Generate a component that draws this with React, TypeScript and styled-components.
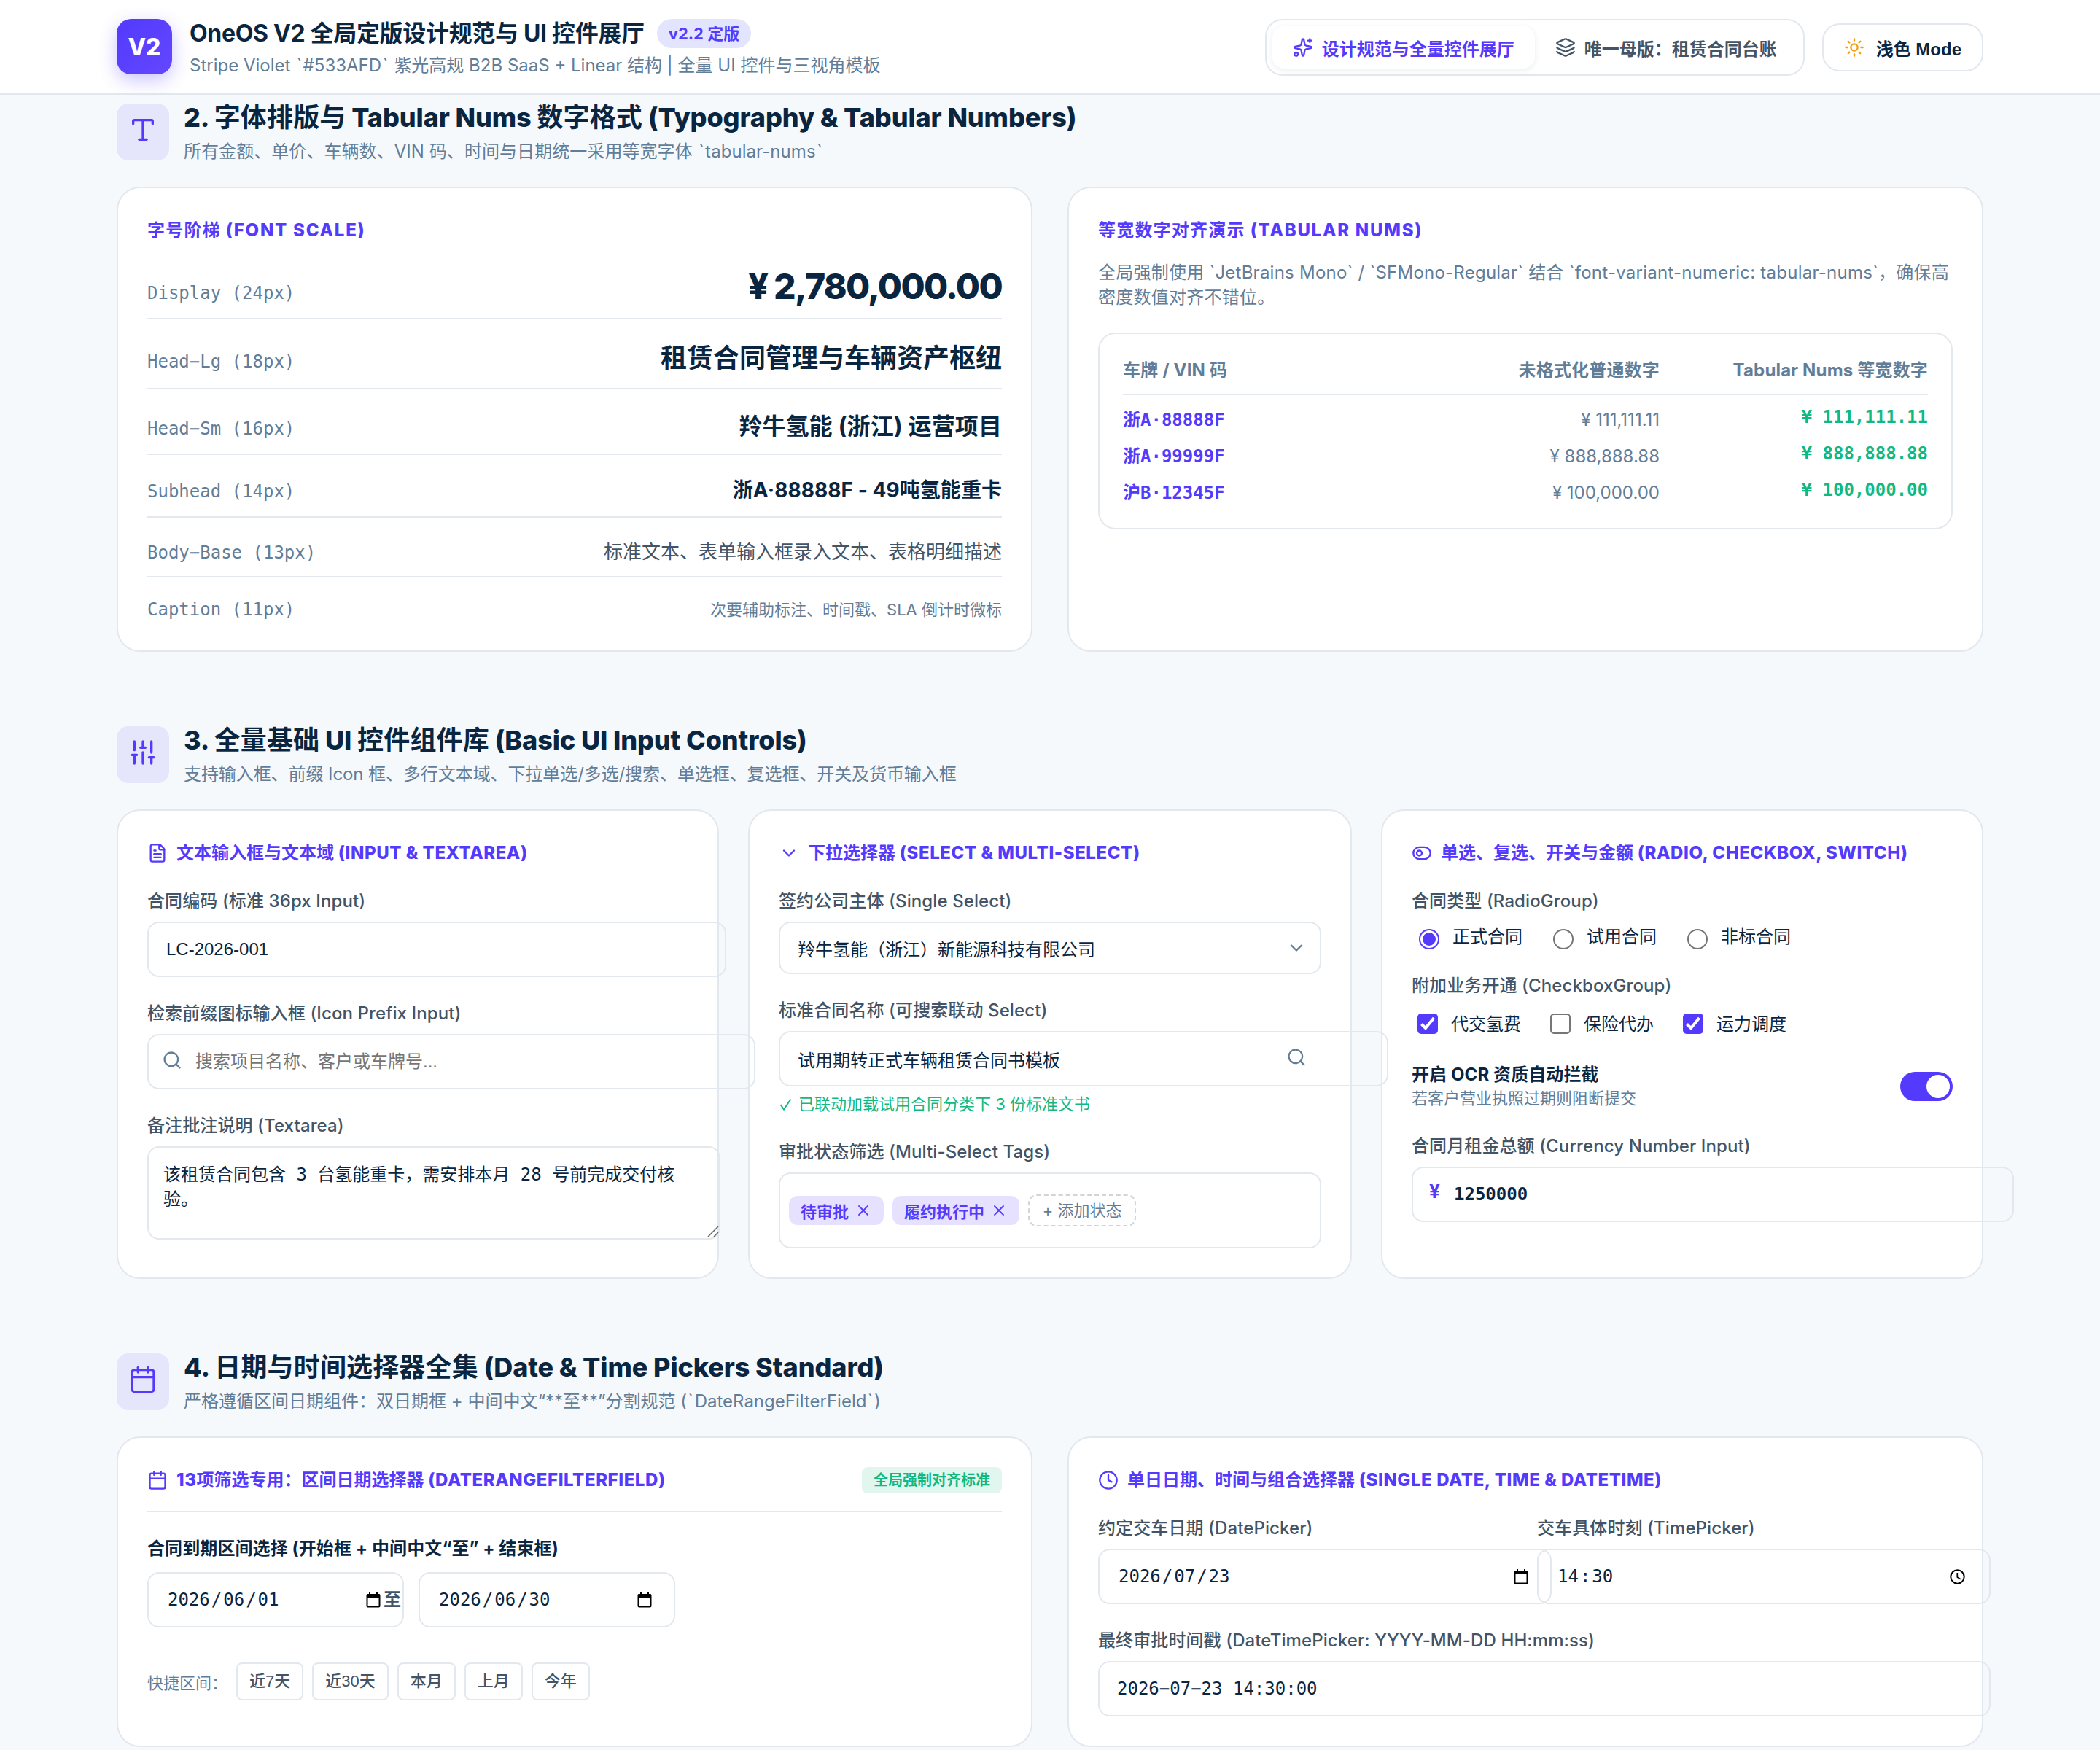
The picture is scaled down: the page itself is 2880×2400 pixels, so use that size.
import React from "react";
import styled, { createGlobalStyle, css } from "styled-components";
import {
  Calendar,
  ChevronDown,
  Clock,
  FileText,
  Layers,
  Search,
  SlidersVertical,
  Sparkles,
  Sun,
  ToggleLeft,
  Type,
  X,
} from "lucide-react";

const color = {
  brand: "#533afd",
  ink: "#0a2540",
  body: "#425466",
  muted: "#627d98",
  line: "#e3e8ee",
  page: "#f6f9fc",
  success: "#10b981",
};
const sans = `Inter, "Noto Sans CJK SC", sans-serif`;
const control = `"Liberation Sans", "Noto Sans CJK SC", sans-serif`;
const mono = `"DejaVu Sans Mono", "Noto Sans CJK SC", monospace`;

const GlobalStyle = createGlobalStyle`
  * { box-sizing: border-box; }
  html, body { margin: 0; background: ${color.page}; }
  body { font-family: ${sans}; font-size: 24px; color: ${color.ink}; -webkit-font-smoothing: antialiased; }
  svg { display: block; flex: none; }
`;

const Page = styled.div`
  width: 2880px;
  height: 2400px;
  overflow: hidden;
  background: ${color.page};
`;

/* ---------- top bar ---------- */
const TopBar = styled.header`
  display: flex;
  justify-content: space-between;
  align-items: center;
  height: 130px;
  padding: 0 160px;
  background: #fff;
  border-bottom: 2px solid ${color.line};
`;
const Brand = styled.div`
  display: flex;
  align-items: center;
  gap: 24px;
`;
const Logo = styled.div`
  display: flex;
  align-items: center;
  justify-content: center;
  width: 76px;
  height: 76px;
  border-radius: 20px;
  background: linear-gradient(135deg, #533afd, #6347ff);
  box-shadow: 0 8px 24px rgba(83, 58, 253, 0.3);
  color: #fff;
  font-size: 32px;
  font-weight: 800;
`;
const BrandTitleRow = styled.div`
  display: flex;
  align-items: center;
  gap: 17px;
  height: 52px;
`;
const BrandTitle = styled.h1`
  margin: 0;
  font-size: 32px;
  line-height: 52px;
  font-weight: 700;
  letter-spacing: -0.32px;
  white-space: nowrap;
`;
const VersionBadge = styled.span`
  height: 40px;
  padding: 0 16px;
  border-radius: 20px;
  background: #e3e5ff;
  color: ${color.brand};
  font-size: 22px;
  font-weight: 700;
  line-height: 40px;
  white-space: nowrap;
`;
const BrandSub = styled.p`
  margin: 0;
  font-size: 24px;
  line-height: 36px;
  color: ${color.muted};
  white-space: nowrap;
`;
const Tick = styled.span`
  padding: 0 1.4px;
`;
const Han = styled.span`
  font-weight: 700;
  letter-spacing: var(--han-tracking, inherit);
`;
const BarActions = styled.div`
  display: flex;
  align-items: center;
  gap: 24px;
  margin-top: 2px;
`;
const Tabs = styled.nav`
  display: flex;
  height: 78px;
  padding: 8px;
  border: 2px solid ${color.line};
  border-radius: 24px;
`;
const Tab = styled.div<{ $active?: boolean }>`
  display: flex;
  align-items: center;
  gap: 12px;
  padding: 0 28px;
  border-radius: 16px;
  font-weight: 600;
  color: ${(p) => (p.$active ? color.brand : color.body)};
  white-space: nowrap;
  ${(p) => p.$active && css`box-shadow: 0 2px 8px rgba(0, 0, 0, 0.08);`}
`;
const ModeButton = styled.div`
  display: flex;
  align-items: center;
  gap: 16px;
  height: 66px;
  padding: 0 28px;
  border: 2px solid ${color.line};
  border-radius: 24px;
  font-family: ${control};
  font-weight: 600;
  white-space: nowrap;
`;

/* ---------- sections ---------- */
const Main = styled.main`
  display: flex;
  flex-direction: column;
  gap: 95px;
  padding: 5px 160px 0;
`;
const SectionHead = styled.div`
  display: flex;
  align-items: center;
  gap: 20px;
  height: 92px;
  margin-bottom: 29px;
`;
const SectionIcon = styled.div`
  width: 72px;
  height: 78px;
  padding: 16px;
  border-radius: 16px;
  background: rgba(83, 58, 253, 0.1);
  color: ${color.brand};
`;
const SectionTitle = styled.h2`
  margin: 0;
  font-size: 36px;
  line-height: 52px;
  font-weight: 800;
  letter-spacing: -0.1px;
  --han-tracking: 0.15px;
  white-space: nowrap;
`;
const SectionSub = styled.p<{ $tracking?: number }>`
  margin: 1px 0 -1px;
  line-height: 40px;
  letter-spacing: ${(p) => p.$tracking ?? 0}px;
  color: ${color.muted};
  white-space: nowrap;
`;
const Grid = styled.div<{ $template: string; $gap: number; $height: number }>`
  display: grid;
  grid-template-columns: ${(p) => p.$template};
  gap: ${(p) => p.$gap}px;
  height: ${(p) => p.$height}px;
`;
const Card = styled.section`
  padding: 40px;
  border: 2px solid ${color.line};
  border-radius: 32px;
  background: #fff;
`;
const CardTitleBox = styled.h3<{ $tracking: number; $bottom: number }>`
  display: flex;
  align-items: center;
  gap: 12px;
  margin: 0 0 ${(p) => p.$bottom}px;
  font-size: 24px;
  line-height: 36px;
  font-weight: 800;
  letter-spacing: ${(p) => p.$tracking + 0.57}px;
  --han-tracking: ${(p) => p.$tracking}px;
  color: ${color.brand};
  white-space: nowrap;
`;

/* ---------- type scale ---------- */
const ScaleRow = styled.div<{ $h: number; $top: number }>`
  display: flex;
  justify-content: space-between;
  align-items: baseline;
  height: ${(p) => p.$h}px;
  padding-top: ${(p) => p.$top}px;
  border-bottom: 2px solid ${color.line};
  white-space: nowrap;
  &:last-child { border-bottom: 0; }
`;
const ScaleName = styled.span`
  font: 24px/24px ${mono};
  color: ${color.muted};
`;
const ScaleValue = styled.span<{ $size: number; $weight: number; $color?: string; $tracking?: number }>`
  font-size: ${(p) => p.$size}px;
  line-height: ${(p) => p.$size}px;
  font-weight: ${(p) => p.$weight};
  color: ${(p) => p.$color ?? color.ink};
  letter-spacing: ${(p) => p.$tracking ?? 0}px;
`;

/* ---------- number table ---------- */
const Note = styled.p`
  margin: 0 0 31px;
  line-height: 34px;
  letter-spacing: 0.24px;
  color: ${color.muted};
`;
const TableBox = styled.div`
  height: 270px;
  padding: 32px;
  border: 2px solid ${color.line};
  border-radius: 24px;
`;
const TableRow = styled.div<{ $head?: boolean }>`
  display: grid;
  grid-template-columns: 1fr 1fr 368px;
  height: 50px;
  line-height: 50px;
  white-space: nowrap;
  ${(p) =>
    p.$head &&
    css`
      height: 52px;
      line-height: 36px;
      margin-bottom: 9px;
      border-bottom: 2px solid ${color.line};
      color: ${color.muted};
      font-weight: 700;
      letter-spacing: 0.18px;
    `}
`;
const RightCell = styled.span`
  text-align: right;
`;
const Plate = styled.span`
  font-family: ${mono};
  font-weight: 700;
  color: ${color.brand};
`;
const PlainNumber = styled(RightCell)`
  color: ${color.muted};
`;
const TabularNumber = styled(RightCell)`
  font-family: ${mono};
  font-weight: 700;
  line-height: 42px;
  color: ${color.success};
`;

/* ---------- form fields ---------- */
const Stack = styled.div`
  display: flex;
  flex-direction: column;
  gap: 34px;
`;
const Label = styled.label<{ $strong?: boolean; $bottom?: number }>`
  display: block;
  margin-bottom: ${(p) => p.$bottom ?? 12}px;
  line-height: 32px;
  font-weight: ${(p) => (p.$strong ? 700 : 500)};
  color: ${(p) => (p.$strong ? color.ink : color.body)};
  letter-spacing: 0.1px;
  white-space: nowrap;
`;
const Control = styled.div`
  position: relative;
  display: flex;
`;
const Adornment = styled.span<{ $side: "left" | "right"; $inset: number; $top: number }>`
  position: absolute;
  top: ${(p) => p.$top}px;
  ${(p) => p.$side}: ${(p) => p.$inset}px;
  color: ${color.muted};
`;
const fieldBox = css`
  flex: none;
  border: 2px solid ${color.line};
  border-radius: 16px;
  background: transparent;
  color: ${color.ink};
  outline: none;
`;
const TextInput = styled.input<{ $left?: number; $right?: number; $mono?: boolean; $bold?: boolean }>`
  ${fieldBox}
  box-sizing: content-box;
  width: 100%;
  height: 72px;
  padding: 0 ${(p) => p.$right ?? 24}px 0 ${(p) => p.$left ?? 24}px;
  font-family: ${(p) => (p.$mono ? mono : control)};
  font-size: 24px;
  font-weight: ${(p) => (p.$bold ? 700 : 400)};
  &::placeholder { color: #757575; }
`;
const TextArea = styled.textarea`
  ${fieldBox}
  box-sizing: content-box;
  width: 100%;
  height: 84px;
  padding: 20px;
  font: 24px/34px ${mono};
  resize: none;
  overflow: hidden;
`;
const ResizeGrip = styled.svg`
  position: absolute;
  left: 768px;
  top: 109px;
`;
const SelectBox = styled.div`
  ${fieldBox}
  display: flex;
  align-items: center;
  justify-content: space-between;
  height: 72px;
  padding: 0 18px 0 24px;
  white-space: nowrap;
  svg { color: ${color.muted}; }
`;
const Helper = styled.div`
  display: flex;
  align-items: center;
  gap: 9px;
  margin-top: 8px;
  font-size: 22px;
  line-height: 32px;
  color: ${color.success};
`;
const TagBox = styled.div`
  ${fieldBox}
  display: flex;
  align-items: center;
  gap: 12px;
  height: 104px;
  padding: 0 12px;
  font-size: 22px;
  white-space: nowrap;
`;
const Tag = styled.span`
  display: flex;
  align-items: center;
  gap: 8px;
  height: 40px;
  padding: 0 16px;
  border-radius: 12px;
  background: #e5e1ff;
  color: ${color.brand};
  font-weight: 600;
`;
const AddTag = styled.span`
  height: 44px;
  width: 148px;
  text-align: center;
  line-height: 40px;
  border: 2px dashed #d0d3d8;
  border-radius: 12px;
  color: ${color.muted};
`;

const Choices = styled.div<{ $h: number }>`
  display: flex;
  gap: 32px;
  height: ${(p) => p.$h}px;
`;
const Choice = styled.span<{ $inset: number; $textTop: number }>`
  display: flex;
  gap: 18px;
  padding-left: ${(p) => p.$inset}px;
  line-height: 32px;
  white-space: nowrap;
  > b { font-weight: 400; margin-top: ${(p) => p.$textTop}px; }
`;
const RadioDot = styled.span<{ $on?: boolean }>`
  display: flex;
  align-items: center;
  justify-content: center;
  width: 28px;
  height: 28px;
  margin-top: 10px;
  border: 2px solid ${(p) => (p.$on ? color.brand : "#767676")};
  border-radius: 50%;
  &::after {
    content: "";
    width: 18px;
    height: 18px;
    border-radius: 50%;
    background: ${(p) => (p.$on ? color.brand : "transparent")};
  }
`;
const CheckSquare = styled.span<{ $on?: boolean }>`
  width: 28px;
  height: 28px;
  margin-top: 10px;
  border: ${(p) => (p.$on ? "0" : "2px solid #767676")};
  border-radius: 5px;
  background: ${(p) => (p.$on ? color.brand : "#fff")};
`;
const SwitchRow = styled.div`
  display: flex;
  justify-content: space-between;
  align-items: center;
  height: 64px;
`;
const SwitchSub = styled.div`
  font-size: 22px;
  line-height: 32px;
  color: ${color.muted};
`;
const Switch = styled.span`
  display: flex;
  justify-content: flex-end;
  width: 72px;
  height: 40px;
  padding: 4px;
  border-radius: 20px;
  background: ${color.brand};
  &::after {
    content: "";
    width: 32px;
    height: 32px;
    border-radius: 50%;
    background: #fff;
  }
`;
const Yen = styled.b`
  font: 700 26px/32px ${sans};
  color: ${color.brand};
`;

/* ---------- date pickers ---------- */
const RangeHead = styled.div`
  display: flex;
  justify-content: space-between;
  align-items: flex-start;
  height: 62px;
  margin-bottom: 34px;
  border-bottom: 2px solid ${color.line};
`;
const StandardBadge = styled.span`
  height: 36px;
  padding: 0 16px;
  border-radius: 8px;
  background: #e1f6ef;
  color: ${color.success};
  font-size: 20px;
  font-weight: 600;
  line-height: 36px;
`;
const RangeRow = styled.div`
  display: grid;
  grid-template-columns: 300px 24px 300px;
  gap: 24px;
  margin-bottom: 48px;
`;
const RangeWord = styled.span`
  position: relative;
  line-height: 76px;
  font-weight: 600;
  color: ${color.body};
`;
const DateBox = styled.div<{ $iconInset?: number }>`
  ${fieldBox}
  box-sizing: content-box;
  display: flex;
  align-items: center;
  justify-content: space-between;
  width: 100%;
  height: 72px;
  padding: 0 24px;
  font-family: ${mono};
  svg { margin-right: ${(p) => p.$iconInset ?? 6}px; }
`;
const DateParts = styled.span`
  display: flex;
  span { padding: 0 2px; }
`;
const QuickRow = styled.div`
  display: flex;
  align-items: center;
  gap: 12px;
  font-size: 22px;
  color: ${color.muted};
  white-space: nowrap;
`;
const QuickButton = styled.span`
  height: 52px;
  padding: 0 16px;
  border: 2px solid ${color.line};
  border-radius: 8px;
  font-family: ${control};
  line-height: 48px;
  font-weight: 500;
  color: ${color.body};
`;
const TwoFields = styled.div`
  display: grid;
  grid-template-columns: 1fr 1fr;
  gap: 32px;
`;

const CheckMark = () => (
  <svg width="28" height="28" viewBox="0 0 28 28" fill="none" stroke="#fff" strokeWidth="4">
    <path d="M5.5 14.5 11 20 22.5 6" />
  </svg>
);
const PickerCalendar = () => (
  <svg width="20" height="21" viewBox="0 0 20 21">
    <rect x="1.5" y="3" width="17" height="16.5" rx="1" fill="none" stroke="#000" strokeWidth="2" />
    <path d="M1 2.5h18V7H1zM4 0h2v3H4zM14 0h2v3h-2z" fill="#000" />
  </svg>
);
const PickerClock = () => (
  <svg width="21" height="21" viewBox="0 0 21 21" fill="none" stroke="#000" strokeWidth="2">
    <circle cx="10.5" cy="10.5" r="9.2" />
    <path d="M10.3 5v6l4.4 2.7" strokeWidth="1.7" />
  </svg>
);

/* Gives the code ticks around inline identifiers a little side room. */
function Ticked({ text }: { text: string }) {
  return (
    <>
      {text.split("`").map((part, i) => (
        <React.Fragment key={i}>
          {i > 0 && <Tick>`</Tick>}
          {part}
        </React.Fragment>
      ))}
    </>
  );
}

/* Headings set Latin extra-bold and Chinese bold, so the runs are split. */
function Mixed({ text }: { text: string }) {
  return (
    <span>
      {text
        .split(/([\u3000-\u9fff\uff00-\uffef]+)/)
        .map((run, i) => (i % 2 ? <Han key={i}>{run}</Han> : run))}
    </span>
  );
}

function CardTitle({
  icon,
  text,
  tracking = 0,
  bottom = 32,
}: {
  icon?: React.ReactNode;
  text: string;
  tracking?: number;
  bottom?: number;
}) {
  return (
    <CardTitleBox $tracking={tracking} $bottom={bottom}>
      {icon}
      <Mixed text={text} />
    </CardTitleBox>
  );
}

function DateField({ value }: { value: string }) {
  const [y, m, d] = value.split("/");
  return (
    <DateBox>
      <DateParts>
        <span>{y}</span>/<span>{m}</span>/<span>{d}</span>
      </DateParts>
      <PickerCalendar />
    </DateBox>
  );
}

function Head({
  icon,
  title,
  sub,
  subTracking,
}: {
  icon: React.ReactNode;
  title: string;
  sub: string;
  subTracking?: number;
}) {
  return (
    <SectionHead>
      <SectionIcon>{icon}</SectionIcon>
      <div>
        <SectionTitle>
          <Mixed text={title} />
        </SectionTitle>
        <SectionSub $tracking={subTracking}>
          <Ticked text={sub} />
        </SectionSub>
      </div>
    </SectionHead>
  );
}

const halves = "repeat(2, minmax(0, 1fr))";
const thirds = "826px 828px 826px";

const scale = [
  { name: "Display (24px)", text: "¥ 2,780,000.00", size: 48, weight: 800, tracking: -1.65, h: 104, top: 35 },
  { name: "Head−Lg (18px)", text: "租赁合同管理与车辆资产枢纽", size: 36, weight: 700, h: 96, top: 35 },
  { name: "Head−Sm (16px)", text: "羚牛氢能 (浙江) 运营项目", size: 32, weight: 700, tracking: 0.1, h: 90, top: 35 },
  { name: "Subhead (14px)", text: "浙A·88888F - 49吨氢能重卡", size: 28, weight: 700, tracking: 0.05, h: 86, top: 34 },
  { name: "Body−Base (13px)", text: "标准文本、表单输入框录入文本、表格明细描述", size: 26, weight: 400, color: color.body, h: 82, top: 34 },
  { name: "Caption (11px)", text: "次要辅助标注、时间戳、SLA 倒计时微标", size: 22, weight: 400, color: color.muted, h: 60, top: 32 },
];
const plates = [
  ["浙A·88888F", "¥ 111,111.11"],
  ["浙A·99999F", "¥ 888,888.88"],
  ["沪B·12345F", "¥ 100,000.00"],
];

export default function App() {
  return (
    <Page>
      <GlobalStyle />
      <TopBar>
        <Brand>
          <Logo>V2</Logo>
          <div>
            <BrandTitleRow>
              <BrandTitle>OneOS V2 全局定版设计规范与 UI 控件展厅</BrandTitle>
              <VersionBadge>v2.2 定版</VersionBadge>
            </BrandTitleRow>
            <BrandSub>
              <Ticked text="Stripe Violet `#533AFD` 紫光高规 B2B SaaS + Linear 结构 | 全量 UI 控件与三视角模板" />
            </BrandSub>
          </div>
        </Brand>
        <BarActions>
          <Tabs>
            <Tab $active>
              <Sparkles size={28} />
              设计规范与全量控件展厅
            </Tab>
            <Tab>
              <Layers size={28} />
              唯一母版：租赁合同台账
            </Tab>
          </Tabs>
          <ModeButton>
            <Sun size={28} color="#f59e0b" />
            浅色 Mode
          </ModeButton>
        </BarActions>
      </TopBar>

      <Main>
        <div>
          <Head
            icon={<Type size={40} />}
            title="2. 字体排版与 Tabular Nums 数字格式 (Typography & Tabular Numbers)"
            sub="所有金额、单价、车辆数、VIN 码、时间与日期统一采用等宽字体 `tabular-nums`"
            subTracking={0.06}
          />
          <Grid $template={halves} $gap={48} $height={638}>
            <Card>
              <CardTitle tracking={1.2} bottom={0} text="字号阶梯 (FONT SCALE)" />
              <div>
                {scale.map((s) => (
                  <ScaleRow key={s.name} $h={s.h} $top={s.top}>
                    <ScaleName>{s.name}</ScaleName>
                    <ScaleValue $size={s.size} $weight={s.weight} $color={s.color} $tracking={s.tracking}>
                      {s.text}
                    </ScaleValue>
                  </ScaleRow>
                ))}
              </div>
            </Card>
            <Card>
              <CardTitle tracking={1.2} bottom={23} text="等宽数字对齐演示 (TABULAR NUMS)" />
              <Note>
                全局强制使用 `JetBrains Mono` / `SFMono-Regular` 结合 `font-variant-numeric: tabular-nums`，确保高密度数值对齐不错位。
              </Note>
              <TableBox>
                <TableRow $head>
                  <span>车牌 / VIN 码</span>
                  <RightCell>未格式化普通数字</RightCell>
                  <RightCell>Tabular Nums 等宽数字</RightCell>
                </TableRow>
                {plates.map(([plate, amount]) => (
                  <TableRow key={plate}>
                    <Plate>{plate}</Plate>
                    <PlainNumber>{amount}</PlainNumber>
                    <TabularNumber>{amount}</TabularNumber>
                  </TableRow>
                ))}
              </TableBox>
            </Card>
          </Grid>
        </div>

        <div>
          <Head
            icon={<SlidersVertical size={40} />}
            title="3. 全量基础 UI 控件组件库 (Basic UI Input Controls)"
            sub="支持输入框、前缀 Icon 框、多行文本域、下拉单选/多选/搜索、单选框、复选框、开关及货币输入框"
            subTracking={-0.08}
          />
          <Grid $template={thirds} $gap={40} $height={644}>
            <Card>
              <CardTitle icon={<FileText size={28} />} text="文本输入框与文本域 (INPUT & TEXTAREA)" />
              <Stack>
                <div>
                  <Label>合同编码 (标准 36px Input)</Label>
                  <Control>
                    <TextInput defaultValue="LC-2026-001" />
                  </Control>
                </div>
                <div>
                  <Label>检索前缀图标输入框 (Icon Prefix Input)</Label>
                  <Control>
                    <Adornment $side="left" $inset={20} $top={22}>
                      <Search size={28} />
                    </Adornment>
                    <TextInput $left={64} placeholder="搜索项目名称、客户或车牌号..." />
                  </Control>
                </div>
                <div>
                  <Label>备注批注说明 (Textarea)</Label>
                  <Control>
                    <TextArea defaultValue="该租赁合同包含 3 台氢能重卡，需安排本月 28 号前完成交付核验。" />
                    <ResizeGrip width="16" height="16" viewBox="0 0 16 16" stroke="#666" strokeWidth="1.5">
                      <path d="M1 15 15 1M9 15l6-6" />
                    </ResizeGrip>
                  </Control>
                </div>
              </Stack>
            </Card>

            <Card>
              <CardTitle icon={<ChevronDown size={28} />} text="下拉选择器 (SELECT & MULTI-SELECT)" />
              <Stack>
                <div>
                  <Label>签约公司主体 (Single Select)</Label>
                  <SelectBox>
                    羚牛氢能（浙江）新能源科技有限公司
                    <ChevronDown size={28} />
                  </SelectBox>
                </div>
                <div>
                  <Label>标准合同名称 (可搜索联动 Select)</Label>
                  <Control>
                    <TextInput $right={64} defaultValue="试用期转正式车辆租赁合同书模板" />
                    <Adornment $side="right" $inset={20} $top={22}>
                      <Search size={28} />
                    </Adornment>
                  </Control>
                  <Helper>
                    <svg width="18" height="20" viewBox="0 0 18 20" fill="none" stroke="currentColor" strokeWidth="2">
                      <path d="M2.5 11 7 17.5 16.5 3.5" />
                    </svg>
                    已联动加载试用合同分类下 3 份标准文书
                  </Helper>
                </div>
                <div>
                  <Label>审批状态筛选 (Multi-Select Tags)</Label>
                  <TagBox>
                    <Tag>
                      待审批
                      <X size={24} strokeWidth={1.8} />
                    </Tag>
                    <Tag>
                      履约执行中
                      <X size={24} strokeWidth={1.8} />
                    </Tag>
                    <AddTag>+ 添加状态</AddTag>
                  </TagBox>
                </div>
              </Stack>
            </Card>

            <Card>
              <CardTitle icon={<ToggleLeft size={28} />} text="单选、复选、开关与金额 (RADIO, CHECKBOX, SWITCH)" />
              <Stack>
                <div>
                  <Label>合同类型 (RadioGroup)</Label>
                  <Choices $h={38}>
                    {["正式合同", "试用合同", "非标合同"].map((t, i) => (
                      <Choice key={t} $inset={10} $textTop={5}>
                        <RadioDot $on={i === 0} />
                        <b>{t}</b>
                      </Choice>
                    ))}
                  </Choices>
                </div>
                <div>
                  <Label>附加业务开通 (CheckboxGroup)</Label>
                  <Choices $h={44}>
                    {["代交氢费", "保险代办", "运力调度"].map((t, i) => (
                      <Choice key={t} $inset={8} $textTop={9}>
                        <CheckSquare $on={i !== 1}>{i !== 1 && <CheckMark />}</CheckSquare>
                        <b>{t}</b>
                      </Choice>
                    ))}
                  </Choices>
                </div>
                <SwitchRow>
                  <div>
                    <Label $strong $bottom={0}>开启 OCR 资质自动拦截</Label>
                    <SwitchSub>若客户营业执照过期则阻断提交</SwitchSub>
                  </div>
                  <Switch />
                </SwitchRow>
                <div>
                  <Label>合同月租金总额 (Currency Number Input)</Label>
                  <Control>
                    <Adornment $side="left" $inset={24} $top={18}>
                      <Yen>¥</Yen>
                    </Adornment>
                    <TextInput $left={56} $mono $bold defaultValue="1250000" />
                  </Control>
                </div>
              </Stack>
            </Card>
          </Grid>
        </div>

        <div>
          <Head
            icon={<Calendar size={40} />}
            title="4. 日期与时间选择器全集 (Date & Time Pickers Standard)"
            sub="严格遵循区间日期组件：双日期框 + 中间中文“**至**”分割规范 (`DateRangeFilterField`)"
          />
          <Grid $template={halves} $gap={48} $height={426}>
            <Card>
              <RangeHead>
                <CardTitle icon={<Calendar size={28} />} text="13项筛选专用：区间日期选择器 (DATERANGEFILTERFIELD)" />
                <StandardBadge>全局强制对齐标准</StandardBadge>
              </RangeHead>
              <Label $strong $bottom={16}>合同到期区间选择 (开始框 + 中间中文“至” + 结束框)</Label>
              <RangeRow>
                <Control>
                  <DateField value="2026/06/01" />
                </Control>
                <RangeWord>至</RangeWord>
                <Control>
                  <DateField value="2026/06/30" />
                </Control>
              </RangeRow>
              <QuickRow>
                快捷区间：
                {["近7天", "近30天", "本月", "上月", "今年"].map((t) => (
                  <QuickButton key={t}>{t}</QuickButton>
                ))}
              </QuickRow>
            </Card>

            <Card>
              <CardTitle icon={<Clock size={28} />} text="单日日期、时间与组合选择器 (SINGLE DATE, TIME & DATETIME)" />
              <Stack>
                <TwoFields>
                  <div>
                    <Label>约定交车日期 (DatePicker)</Label>
                    <Control>
                      <DateField value="2026/07/23" />
                    </Control>
                  </div>
                  <div>
                    <Label>交车具体时刻 (TimePicker)</Label>
                    <Control>
                      <DateBox $iconInset={9}>
                        <DateParts>
                          <span>14</span>:<span>30</span>
                        </DateParts>
                        <PickerClock />
                      </DateBox>
                    </Control>
                  </div>
                </TwoFields>
                <div>
                  <Label>最终审批时间戳 (DateTimePicker: YYYY-MM-DD HH:mm:ss)</Label>
                  <Control>
                    <TextInput $mono defaultValue="2026−07−23 14:30:00" />
                  </Control>
                </div>
              </Stack>
            </Card>
          </Grid>
        </div>
      </Main>
    </Page>
  );
}
